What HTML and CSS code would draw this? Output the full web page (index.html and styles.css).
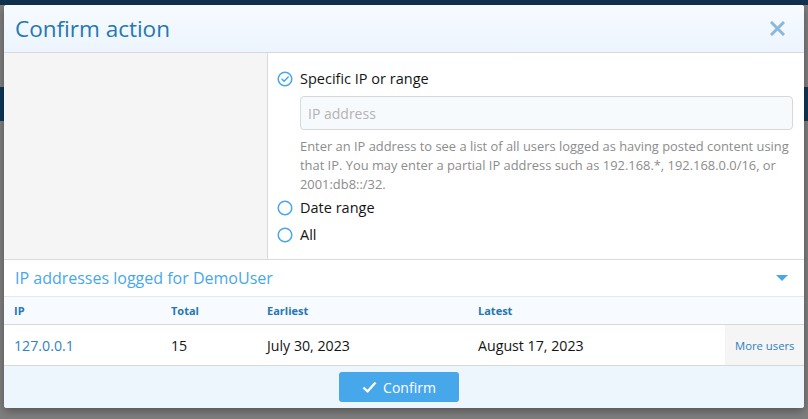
FILE: index.html
```html
<!DOCTYPE html>
<html lang="en">
<head>
  <meta charset="UTF-8">
  <title>Confirm action</title>
  <link rel="stylesheet" href="styles.css">
</head>
<body>
  <div class="overlay">
    <div class="modal">
      <!-- Header -->
      <div class="modal-header">
        <h1>Confirm action</h1>
        <svg class="close" width="15" height="15" viewBox="0 0 15 15"><path d="M2 2l11 11M13 2L2 13" stroke="#8bb8dd" stroke-width="3" stroke-linecap="square"/></svg>
      </div>

      <!-- Options -->
      <div class="modal-body">
        <div class="side"></div>
        <div class="options">
          <label class="radio">
            <svg width="16" height="16" viewBox="0 0 16 16"><circle cx="8" cy="8" r="6.8" fill="none" stroke="#47a7eb" stroke-width="1.5"/><path d="M5 8.2l2.1 2.1L11.2 6" fill="none" stroke="#47a7eb" stroke-width="1.5" stroke-linecap="round" stroke-linejoin="round"/></svg>
            Specific IP or range
          </label>
          <input class="ip-input" type="text" placeholder="IP address">
          <p class="hint">Enter an IP address to see a list of all users logged as having posted content using that IP. You may enter a partial IP address such as 192.168.*, 192.168.0.0/16, or 2001:db8::/32.</p>
          <label class="radio">
            <svg width="16" height="16" viewBox="0 0 16 16"><circle cx="8" cy="8" r="6.8" fill="none" stroke="#47a7eb" stroke-width="1.5"/></svg>
            Date range
          </label>
          <label class="radio">
            <svg width="16" height="16" viewBox="0 0 16 16"><circle cx="8" cy="8" r="6.8" fill="none" stroke="#47a7eb" stroke-width="1.5"/></svg>
            All
          </label>
        </div>
      </div>

      <!-- IP list -->
      <div class="block-header">
        <span>IP addresses logged for DemoUser</span>
        <span class="caret"></span>
      </div>
      <table class="ip-table">
        <colgroup>
          <col style="width:157px">
          <col style="width:96px">
          <col style="width:211px">
          <col style="width:257px">
          <col>
        </colgroup>
        <thead>
          <tr>
            <th>IP</th>
            <th>Total</th>
            <th>Earliest</th>
            <th>Latest</th>
            <th></th>
          </tr>
        </thead>
        <tbody>
          <tr>
            <td class="ip">127.0.0.1</td>
            <td>15</td>
            <td>July 30, 2023</td>
            <td>August 17, 2023</td>
            <td class="more"><a href="#">More users</a></td>
          </tr>
        </tbody>
      </table>

      <!-- Footer -->
      <div class="modal-footer">
        <button class="button">
          <svg width="15" height="12" viewBox="0 0 15 12"><path d="M1.5 6.5l4 4L13.5 1.5" fill="none" stroke="#fff" stroke-width="2.4" stroke-linejoin="round"/></svg>
          Confirm
        </button>
      </div>
    </div>
  </div>
</body>
</html>
```

FILE: styles.css
```css
/* General */
body {
  margin: 0;
  font-family: "Open Sans", "Noto Sans", sans-serif;
  color: #141414;
  background:
    linear-gradient(#12314f, #12314f) 0 0 / 100% 5px no-repeat,
    linear-gradient(#0f3858, #0f3858) 0 87px / 100% 34px no-repeat,
    #7f7f7f;
  height: 419px;
  overflow: hidden;
}

.overlay {
  padding: 5px 4px;
}

.modal {
  background: #fff;
  border-radius: 3px;
  overflow: hidden;
  box-shadow: 0 3px 10px rgba(0, 0, 0, 0.35);
}

/* Header */
.modal-header {
  display: flex;
  justify-content: space-between;
  align-items: center;
  height: 47px;
  padding: 0 19px 0 11px;
  background: linear-gradient(#f7fbff, #ecf4fd);
  border-bottom: 1px solid #d8d8d8;
}

.modal-header h1 {
  margin: 0;
  font-size: 22.5px;
  font-weight: normal;
  color: #2577b1;
}

/* Body */
.modal-body {
  display: flex;
  border-bottom: 1px solid #dadada;
}

.side {
  width: 263px;
  background: #f5f5f5;
  border-right: 1px solid #dadada;
}

.options {
  flex: 1;
  padding: 12px 11px 11px 9px;
}

.radio {
  display: flex;
  align-items: center;
  gap: 7px;
  height: 27px;
  font-size: 14.5px;
}

.ip-input {
  display: block;
  box-sizing: border-box;
  width: calc(100% - 23px);
  height: 34px;
  margin: 4px 0 0 23px;
  padding: 0 7px;
  border: 1px solid #d8d8d8;
  border-radius: 4px;
  background: #f7fafd;
  font-family: inherit;
  font-size: 14px;
}

.ip-input::placeholder {
  color: #b3b3b3;
}

.hint {
  margin: 7px 0 0 23px;
  font-size: 12.9px;
  line-height: 19px;
  color: #8c8c8c;
}

/* IP block */
.block-header {
  display: flex;
  justify-content: space-between;
  align-items: center;
  height: 36px;
  padding: 0 16px 0 11px;
  font-size: 16px;
  color: #47a7eb;
  border-bottom: 1px solid #e1e8ef;
}

.caret {
  width: 0;
  height: 0;
  border-left: 6px solid transparent;
  border-right: 6px solid transparent;
  border-top: 6px solid #47a7eb;
}

.ip-table {
  width: 100%;
  border-collapse: collapse;
  table-layout: fixed;
  font-size: 14.2px;
}

.ip-table th {
  height: 27px;
  padding: 0 10px;
  text-align: left;
  font-size: 11px;
  color: #2577b1;
  background: #f7fafe;
  border-bottom: 1px solid #d8d8d8;
}

.ip-table td {
  height: 40px;
  padding: 0 10px;
}

.ip-table .ip {
  color: #2f83c3;
}

.ip-table .more {
  padding: 0 6px 0 10px;
  background: #f5f5f5;
  font-size: 11.3px;
  white-space: nowrap;
}

.more a {
  color: #2f7fbf;
  text-decoration: none;
}

/* Footer */
.modal-footer {
  display: flex;
  justify-content: center;
  padding: 6px 10px 6px 0;
  background: #edf5fd;
  border-top: 1px solid #d8d8d8;
}

.button {
  display: flex;
  align-items: center;
  justify-content: center;
  gap: 6px;
  width: 120px;
  height: 30px;
  border: none;
  border-radius: 3px;
  background: #47a7eb;
  color: #fff;
  font-family: inherit;
  font-size: 14px;
}
```
